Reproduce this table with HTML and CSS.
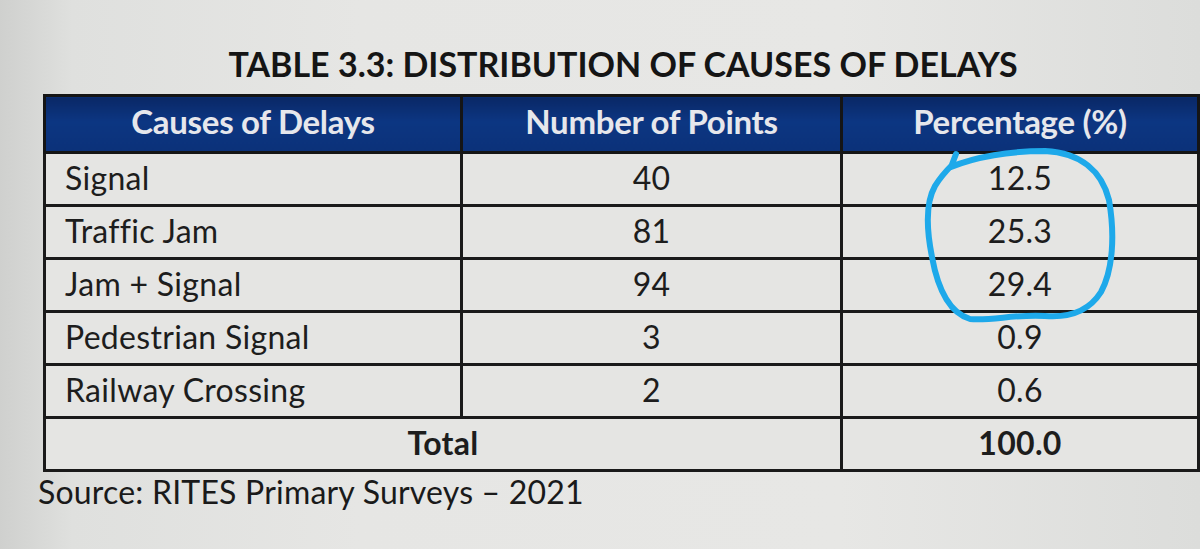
FILE: index.html
```html
<!DOCTYPE html>
<html lang="en">
<head>
<meta charset="utf-8">
<title>Table 3.3</title>
<link rel="stylesheet" href="styles.css">
</head>
<body>
<div class="page">
  <h1 class="title">TABLE 3.3: DISTRIBUTION OF CAUSES OF DELAYS</h1>
  <table class="data">
    <colgroup>
      <col class="c1"><col class="c2"><col class="c3">
    </colgroup>
    <thead>
      <tr>
        <th>Causes of Delays</th>
        <th>Number of Points</th>
        <th>Percentage (%)</th>
      </tr>
    </thead>
    <tbody>
      <tr><td class="name">Signal</td><td class="num">40</td><td class="num">12.5</td></tr>
      <tr><td class="name">Traffic Jam</td><td class="num">81</td><td class="num">25.3</td></tr>
      <tr><td class="name">Jam + Signal</td><td class="num">94</td><td class="num">29.4</td></tr>
      <tr><td class="name">Pedestrian Signal</td><td class="num">3</td><td class="num">0.9</td></tr>
      <tr><td class="name">Railway Crossing</td><td class="num">2</td><td class="num">0.6</td></tr>
      <tr class="total"><td colspan="2" class="num">Total</td><td class="num">100.0</td></tr>
    </tbody>
  </table>
  <p class="source">Source: RITES Primary Surveys – 2021</p>
  <svg class="mark" width="1200" height="549" viewBox="0 0 1200 549" aria-hidden="true">
    <path d="M956,154 L951,167 C975,157 1010,151 1045,151 C1082,153 1102,172 1109,200 C1115,235 1113,270 1101,292 C1089,311 1070,318 1045,316 C1015,314 992,321 970,319 C950,313 938,290 932,257 C926,227 926,202 935,186 C941,176 948,169 953,164"
      fill="none" stroke="#1ea9ea" stroke-width="6" stroke-linecap="round" stroke-linejoin="round"/>
  </svg>
</div>
</body>
</html>
```

FILE: styles.css
```css
html, body {
  margin: 0;
  padding: 0;
}
body {
  width: 1200px;
  height: 549px;
  overflow: hidden;
  background: linear-gradient(90deg, #cfd0ce 0%, #dfe0de 6%, #e6e6e4 30%, #e7e7e5 70%, #dcdddb 100%);
  font-family: Lato, "Open Sans", sans-serif;
  color: #1d1d1d;
}
.page {
  position: relative;
  width: 1200px;
  height: 549px;
  padding-top: 44px;
  box-sizing: border-box;
}
.title {
  margin: 0 0 10px 0;
  text-align: center;
  padding-left: 46px;
  font-size: 34px;
  line-height: 40px;
  font-weight: 700;
  color: #151515;
}
.data {
  margin-left: 43px;
  width: 1154px;
  border-collapse: collapse;
  table-layout: fixed;
  background: #e5e5e3;
}
.c1 { width: 417px; }
.c2 { width: 380px; }
.c3 { width: 357px; }
.data th {
  height: 48px;
  padding: 0 0 6px 0;
  line-height: 36px;
  background: linear-gradient(180deg, #0a2866 0%, #0c3682 45%, #0b3179 100%);
  color: #e6e7ec;
  font-size: 33px;
  font-weight: 700;
  letter-spacing: -0.3px;
  text-align: center;
  border: 3px solid #151515;
}
.data td {
  height: 47px;
  padding: 0 0 3px 0;
  line-height: 36px;
  border: 3px solid #1a1a1a;
  font-size: 32px;
  font-weight: 400;
  letter-spacing: 0.3px;
  vertical-align: middle;
}
.data td.name {
  padding-left: 19px;
  text-align: left;
}
.data td.num {
  text-align: center;
}
.data tr.total td {
  font-weight: 700;
}
.source {
  margin: 2px 0 0 38px;
  font-size: 32px;
  line-height: 36px;
  letter-spacing: 0.2px;
  color: #1a1a1a;
}
.mark {
  position: absolute;
  top: 0;
  left: 0;
  pointer-events: none;
}
```
